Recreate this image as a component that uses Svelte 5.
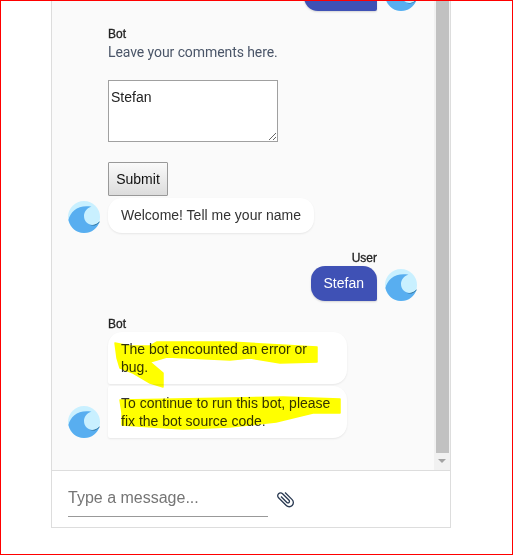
<script>
  const clip = "M16.5 6v11.5c0 2.21-1.79 4-4 4s-4-1.79-4-4V5c0-1.38 1.12-2.5 2.5-2.5s2.5 1.12 2.5 2.5v10.5c0 .55-.45 1-1 1s-1-.45-1-1V6H10v9.5c0 1.38 1.12 2.5 2.5 2.5s2.5-1.12 2.5-2.5V5c0-2.21-1.79-4-4-4S7 2.79 7 5v12.5c0 3.04 2.46 5.5 5.5 5.5s5.5-2.46 5.5-5.5V6h-1.5z";
</script>

{#snippet avatar()}
  <svg class="avatar" viewBox="0 0 32 32" aria-hidden="true">
    <circle cx="16" cy="16" r="16" fill="#c9f0ff" />
    <path d="M0.4 19C2.5 10.5 10.5 3.5 23.5 5.8C19 7 16 10.8 16 15C16 20.5 20.4 24.2 25 24C27.5 23.9 29.8 22.5 31.6 20.2C29.8 27.2 23.5 32 16 32C8.5 32 2.2 26.7 0.4 19z" fill="#58aef0" />
    <path d="M21 23.4C24.6 24.8 28.6 23.8 31.7 20.2L31.4 21.4C28.4 24.6 24.4 25.4 21 23.4z" fill="#2f6f94" />
  </svg>
{/snippet}

<div class="page">
  <section class="chat">
    <div class="body">
      <div class="log">
        <div class="row user">
          <div class="col"><div class="bubble me clipped"></div></div>
          {@render avatar()}
        </div>

        <div class="row bot form-row">
          <div class="col">
            <div class="name">Bot</div>
            <div class="plain">Leave your comments here.</div>
            <textarea class="area" readonly>Stefan</textarea>
            <button class="submit" type="button">Submit</button>
          </div>
        </div>

        <div class="row bot welcome">
          {@render avatar()}
          <div class="col"><div class="bubble them solo">Welcome! Tell me your name</div></div>
        </div>

        <div class="row user answer">
          <div class="col">
            <div class="name">User</div>
            <div class="bubble me">Stefan</div>
          </div>
          {@render avatar()}
        </div>

        <div class="row bot error">
          {@render avatar()}
          <div class="col">
            <div class="name">Bot</div>
            <div class="bubble them first wide">The bot encounted an error or bug.</div>
            <div class="bubble them last wide">To continue to run this bot, please fix the bot source code.</div>
          </div>
          <svg class="marker" viewBox="0 0 240 100" aria-hidden="true">
            <path d="M7 5 L22 8 L42 8 L49 4 L122 4 L209 9 L209 24 L172 25 L142 20 L122 22 L59 19 L42 24 L55 35 L55 49 L42 45 L25 35 L12 30 L9 20z" />
            <path d="M12 62 L122 60 L175 59 L232 61 L232 75 L205 75 L168 84 L122 89 L75 91 L14 87 L14 75z" />
          </svg>
        </div>
      </div>

      <div class="scrollbar">
        <div class="thumb"></div>
        <div class="down"></div>
      </div>
    </div>

    <footer class="composer">
      <input class="field" placeholder="Type a message..." />
      <svg class="clip" viewBox="0 0 24 24" aria-hidden="true"><path d={clip} /></svg>
    </footer>
  </section>
</div>

<style>
  :global(body) {
    margin: 0;
    background: #fff;
    font-family: "Liberation Sans", Arial, sans-serif;
  }
  .page {
    box-sizing: border-box;
    width: 513px;
    height: 555px;
    border: 1px solid #f00;
    overflow: hidden;
    padding-left: 50px;
  }
  .chat {
    box-sizing: border-box;
    width: 400px;
    height: 527px;
    border: 1px solid #ddd;
    border-top: 0;
    display: flex;
    flex-direction: column;
    background: #fff;
  }
  .body {
    height: 470px;
    flex-shrink: 0;
    display: flex;
    background: #fafafa;
    border-bottom: 1px solid #ddd;
    box-sizing: border-box;
    overflow: hidden;
  }
  .log {
    flex: 1;
    min-width: 0;
    display: flex;
    flex-direction: column;
    justify-content: flex-end;
    padding: 0 17px 32px 16px;
    overflow: hidden;
  }
  .row {
    display: flex;
    align-items: flex-end;
    gap: 8px;
    flex-shrink: 0;
    position: relative;
  }
  .user { justify-content: flex-end; }
  .col { display: flex; flex-direction: column; min-width: 0; }
  .user .col { align-items: flex-end; }
  .avatar { width: 32px; height: 32px; flex-shrink: 0; display: block; }
  .form-row { padding-left: 40px; margin-top: 16px; }
  .welcome { margin-top: 2px; }
  .answer { margin-top: 18px; }
  .error { margin-top: 16px; }
  .name {
    font-size: 12px;
    line-height: 14px;
    color: #222;
    -webkit-text-stroke: 0.3px #222;
    margin-bottom: 1px;
  }
  .plain {
    font-family: Roboto, "Liberation Sans", sans-serif;
    font-size: 14px;
    letter-spacing: -0.08px;
    line-height: 20px;
    color: #4a5568;
  }
  .area {
    display: block;
    box-sizing: border-box;
    width: 170px;
    height: 62px;
    margin-top: 18px;
    border: 1px solid #a0a0a0;
    border-radius: 0;
    padding: 6px 2px;
    font: 14px/20px "Liberation Sans", Arial, sans-serif;
    color: #222;
    background: #fff;
    outline: none;
  }
  .submit {
    display: block;
    box-sizing: border-box;
    width: 60px;
    height: 34px;
    margin-top: 20px;
    border: 1px solid #999;
    border-radius: 1px;
    padding: 0;
    font: 14px "Liberation Sans", Arial, sans-serif;
    color: #111;
    background: linear-gradient(#fafafa, #dcdcdc);
  }
  .bubble {
    box-sizing: border-box;
    font-size: 14px;
    line-height: 18px;
    padding: 8px 13px;
    border-radius: 14px;
  }
  .me {
    background: #3f51b5;
    color: #fff;
    height: 35px;
    border-bottom-right-radius: 2px;
    box-shadow: 0 1px 2px rgba(0, 0, 0, 0.15);
  }
  .clipped { width: 73px; }
  .them {
    background: #fff;
    color: #333;
    box-shadow: 0 1px 2px rgba(0, 0, 0, 0.08);
  }
  .solo { white-space: nowrap; height: 35px; }
  .first { border-bottom-left-radius: 2px; margin-bottom: 2px; }
  .last { border-top-left-radius: 2px; border-bottom-left-radius: 2px; }
  .wide { width: 239px; }
  .marker {
    position: absolute;
    left: 40px;
    bottom: 0;
    width: 240px;
    height: 100px;
    mix-blend-mode: multiply;
    pointer-events: none;
  }
  .marker path { fill: #ff0; stroke: #ff0; stroke-width: 1.5; stroke-linejoin: round; }
  .scrollbar {
    width: 16px;
    flex-shrink: 0;
    background: #f1f1f1;
    display: flex;
    flex-direction: column;
    align-items: center;
  }
  .thumb {
    width: 13px;
    height: 452px;
    background: #c1c1c1;
  }
  .down {
    width: 0;
    height: 0;
    margin-top: 6px;
    border-left: 4px solid transparent;
    border-right: 4px solid transparent;
    border-top: 4px solid #a3a3a3;
  }
  .composer {
    flex: 1;
    display: flex;
    align-items: flex-start;
    padding: 9px 16px 0;
    gap: 7px;
  }
  .field {
    box-sizing: border-box;
    width: 200px;
    height: 37px;
    border: 0;
    border-bottom: 1px solid #999;
    padding: 0;
    font: 16px "Liberation Sans", Arial, sans-serif;
    background: transparent;
    outline: none;
  }
  .field::placeholder { color: #757575; opacity: 1; }
  .clip {
    width: 21px;
    height: 21px;
    margin-top: 9px;
    transform: rotate(-45deg);
  }
  .clip path { fill: #2a3a52; }
</style>
